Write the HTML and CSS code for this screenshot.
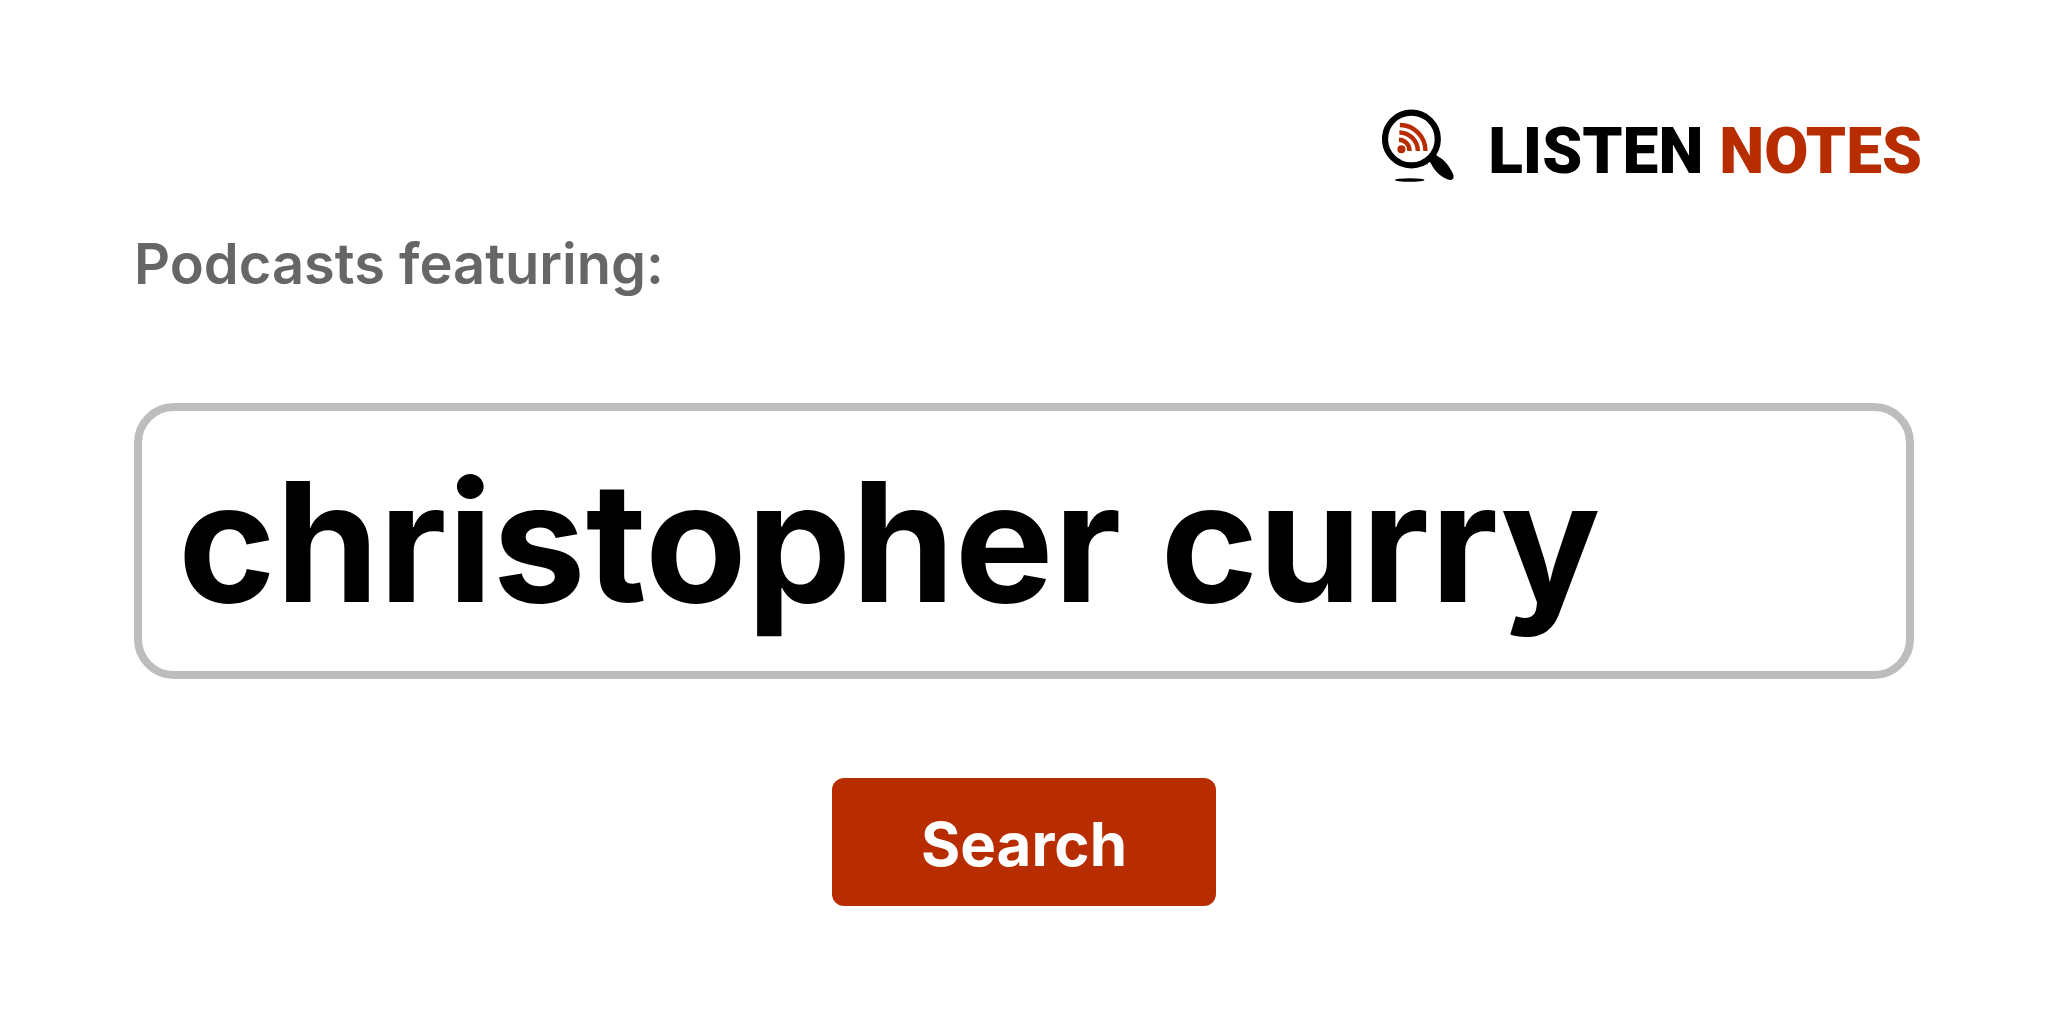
FILE: index.html
```html
<!DOCTYPE html>
<html lang="en">
<head>
<meta charset="utf-8">
<meta name="viewport" content="width=device-width, initial-scale=1">
<title>Listen Notes</title>
<link rel="stylesheet" href="styles.css">
</head>
<body>
<div class="page">
  <header class="header">
    <a class="brand" href="#">
      <svg class="brand-icon" viewBox="14 9 72 74" aria-hidden="true">
        <circle cx="43.4" cy="39" r="26.4" fill="#fff" stroke="#000" stroke-width="6.2"/>
        <path d="M60 60 L66 53 L70 56.500 C76 59 82 67 85 74 C86.500 78 85 80.500 82 80 C75 79 66 71 63 63.500 Z" fill="#000"/>
        <ellipse cx="41.700" cy="80" rx="14.800" ry="1.800" fill="#000"/>
        <circle cx="33.400" cy="49.300" r="4" fill="#b72d00"/>
        <g fill="none" stroke="#b72d00" stroke-width="4.400">
          <path d="M31.900 25 A25.600 26 0 0 1 57.500 51"/>
          <path d="M31.400 32.500 A18.400 18.500 0 0 1 49.800 51"/>
          <path d="M31 39.700 A10.600 11.300 0 0 1 41.600 51"/>
        </g>
      </svg>
      <span class="brand-name">LISTEN <span class="brand-accent">NOTES</span></span>
    </a>
  </header>
  <form class="search">
    <label class="search-label" for="query">Podcasts featuring:</label>
    <input class="search-input" id="query" type="text" value="christopher curry">
    <button class="search-button" type="submit">Search</button>
  </form>
</div>
</body>
</html>
```
FILE: styles.css
```css
* {
  box-sizing: border-box;
}

body {
  margin: 0;
  background: #fff;
  color: #000;
  font-family: Inter, "Liberation Sans", sans-serif;
}

.page {
  padding: 109px 134px;
}

.header {
  display: flex;
  justify-content: flex-end;
  margin-right: -8px;
}

.brand {
  display: flex;
  align-items: flex-start;
  gap: 34px;
  color: #000;
  text-decoration: none;
}

.brand-icon {
  width: 72px;
  height: 74px;
}

.brand-name {
  font: 900 64px/86px Roboto, sans-serif;
}

.brand-accent {
  color: #b72d00;
}

.search {
  display: flex;
  flex-direction: column;
}

.search-label {
  margin-top: 35px;
  color: #666;
  font-size: 56px;
  font-weight: 600;
  line-height: 68px;
}

.search-input {
  width: 100%;
  height: 276px;
  margin-top: 105px;
  padding: 0 36px;
  border: 8px solid #bdbdbd;
  border-radius: 40px;
  background: #fff;
  color: #000;
  font-family: inherit;
  font-size: 166px;
  font-weight: 700;
  outline: none;
}

.search-button {
  align-self: center;
  width: 384px;
  height: 128px;
  margin-top: 99px;
  padding: 4px 0 0;
  border: 0;
  border-radius: 12px;
  background: #b72d00;
  color: #fff;
  font-family: inherit;
  font-size: 60px;
  font-weight: 700;
}
```
